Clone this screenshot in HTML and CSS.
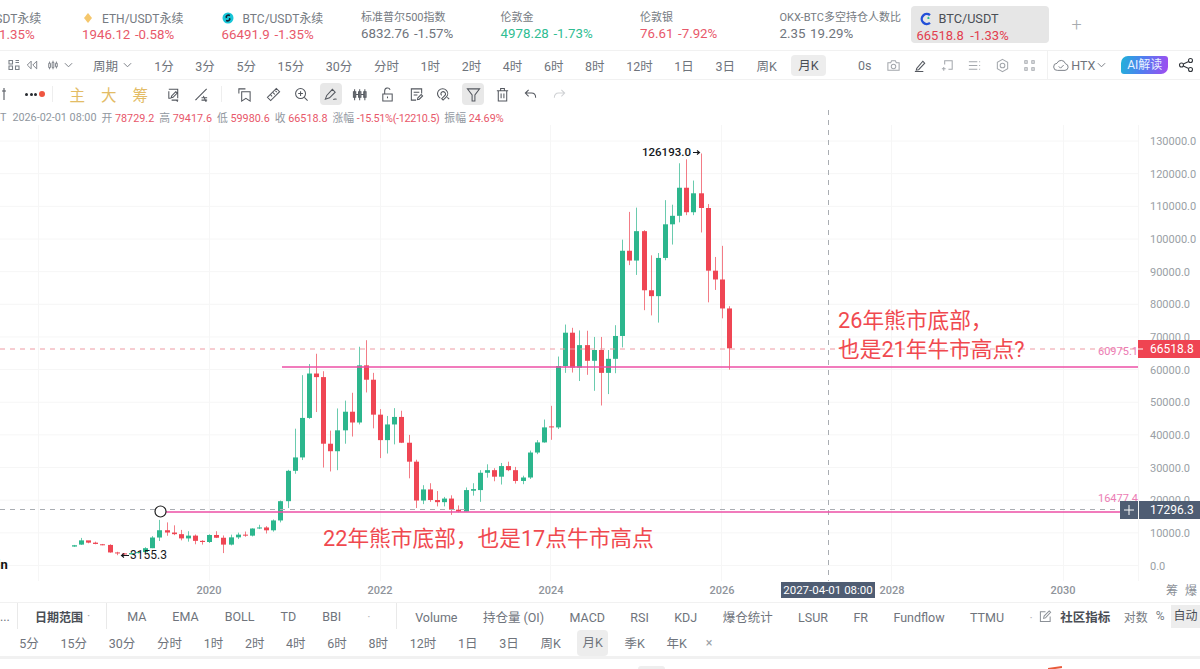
FILE: index.html
```html
<!DOCTYPE html>
<html lang="en">
<head>
  <meta charset="UTF-8" />
  <title>BTC/USDT</title>
  <link rel="stylesheet" href="styles.css">
</head>
<body>
  <header class="tickers">
    <div class="ticker first">
      <div class="name name-icon">BTC/USDT永续</div>
      <div class="value red">66491.9&nbsp;&nbsp;-1.35%</div>
    </div>
    <div class="ticker">
      <div class="name">
        <svg class="coin" viewBox="0 0 10 12"><path d="M5 1 9 6 5 11 1 6Z" fill="#f5c76c"/></svg>
        ETH/USDT永续
      </div>
      <div class="value red">1946.12&nbsp;&nbsp;-0.58%</div>
    </div>
    <div class="ticker">
      <div class="name">
        <svg class="coin" viewBox="0 0 12 12"><circle cx="6" cy="6" r="5.5" fill="#17c6d8"/><path d="M8 3.5C5.5 2.5 3.5 4 4.5 6M4 8.5C6.5 9.500 8.500 8 7.500 6" fill="none" stroke="#123" stroke-width="1.6"/></svg>
        BTC/USDT永续
      </div>
      <div class="value red">66491.9&nbsp;&nbsp;-1.35%</div>
    </div>
    <div class="ticker plain">
      <div class="name">标准普尔500指数</div>
      <div class="value">6832.76&nbsp;&nbsp;-1.57%</div>
    </div>
    <div class="ticker plain">
      <div class="name">伦敦金</div>
      <div class="value green">4978.28&nbsp;&nbsp;-1.73%</div>
    </div>
    <div class="ticker plain">
      <div class="name">伦敦银</div>
      <div class="value red">76.61&nbsp;&nbsp;-7.92%</div>
    </div>
    <div class="ticker plain wide">
      <div class="name">OKX-BTC多空持仓人数比</div>
      <div class="value">2.35&nbsp;&nbsp;19.29%</div>
    </div>
    <div class="ticker-active">
      <div class="name">
        <svg class="coin-main" viewBox="0 0 14 14">
          <path d="M11 3.200A5 5 0 1 0 11 10.800" fill="none" stroke="#2350d8" stroke-width="2.400"/>
          <path d="M9 5.200A2.600 2.600 0 0 1 9.500 7" fill="none" stroke="#2bbf8e" stroke-width="2"/>
        </svg>
        BTC/USDT
      </div>
      <div class="value">66518.8&nbsp;&nbsp;-1.33%</div>
    </div>
    <div class="ticker-add">+</div>
  </header>

  <div class="toolbar periods">
    <span class="ico left-ico"><svg viewBox="0 0 12 12"><path d="M1 1.500h3.500v3.500H1ZM1 7h3.500v3.500H1ZM7.500 1.500H11M7.500 3.500H11M7.500 7H11v3.500H7.500Z"/></svg></span>
    <span class="ico left-ico"><svg viewBox="0 0 14 12"><path d="M6 1.500 1.500 6 6 10.500V1.500ZM12.500 1.500 8 6l4.500 4.500V1.500Z"/></svg></span>
    <span class="ico left-ico"><svg viewBox="0 0 14 12"><path d="M2 4h2v5H2ZM3 2v2M3 9v2M6 3h2v6H6ZM7 1v2M7 9v2M10 4h2v4h-2ZM11 2v2M11 8v2"/></svg></span>
    <svg class="chev" viewBox="0 0 10 6"><path d="M1 1 5 5 9 1"/></svg>
    <span class="period period-menu">周期 <svg class="chev" viewBox="0 0 10 6"><path d="M1 1 5 5 9 1"/></svg></span>
    <span class="period">1分</span>
    <span class="period">3分</span>
    <span class="period">5分</span>
    <span class="period">15分</span>
    <span class="period">30分</span>
    <span class="period">分时</span>
    <span class="period">1时</span>
    <span class="period">2时</span>
    <span class="period">4时</span>
    <span class="period">6时</span>
    <span class="period">8时</span>
    <span class="period">12时</span>
    <span class="period">1日</span>
    <span class="period">3日</span>
    <span class="period">周K</span>
    <span class="period active">月K</span>
    <div class="period-right">
      <span class="seconds">0s</span>
      <span class="ico light"><svg viewBox="0 0 16 16"><path d="M2 5h3l1-2h4l1 2h3v8H2Z"/><circle cx="8" cy="9" r="2.400"/></svg></span>
      <span class="ico dark"><svg viewBox="0 0 16 16"><path d="M4 11 10.500 3.500l2 2L6 12.500l-2.500.5ZM2 14.500h9"/></svg></span>
      <span class="ico light"><svg viewBox="0 0 16 16"><path d="M5 7V3h8v9H9M2 11.500h4M4 9.500v4"/></svg></span>
      <span class="ico light"><svg viewBox="0 0 16 16"><path d="M2 4h9M2 8h9M2 12h9M13 4h1M13 8h1M13 12h1"/></svg></span>
      <span class="ico light"><svg viewBox="0 0 16 16"><path d="M8 1.500 13.500 4.700v6.600L8 14.500 2.500 11.300V4.700Z"/><circle cx="8" cy="8" r="2.500"/></svg></span>
      <span class="ico light"><svg viewBox="0 0 16 16"><path d="M3 3h2.500v2.500H3ZM10.500 3H13v2.500h-2.500ZM3 10.500h2.500V13H3ZM10.500 10.500H13V13h-2.500Z"/></svg></span>
      <div class="source">
        <svg class="cloud" viewBox="0 0 18 14"><path d="M5 12.500a4 4 0 0 1-.5-8A5 5 0 0 1 14 5a3.800 3.800 0 0 1-.5 7.500ZM6.500 8l2 2 3.500-3.500"/></svg>
        HTX
        <svg class="chev" viewBox="0 0 10 6"><path d="M1 1 5 5 9 1"/></svg>
      </div>
      <span class="ai-btn">AI解读</span>
      <span class="ico share"><svg viewBox="0 0 16 16"><circle cx="3.500" cy="8" r="2"/><circle cx="12.500" cy="3.500" r="2"/><circle cx="12.500" cy="12.500" r="2"/><path d="M5.300 7 10.700 4.500M5.300 9l5.400 2.500"/></svg></span>
    </div>
  </div>

  <div class="toolbar tools">
    <span class="pin"><svg viewBox="0 0 6 14"><path d="M3 1v12M1 4h4"/></svg></span>
    <span class="dots"><i></i><i></i><i></i><b></b></span>
    <span class="sep"></span>
    <span class="chip">主</span>
    <span class="chip">大</span>
    <span class="chip">筹</span>
    <span class="tool"><svg viewBox="0 0 16 16"><path d="M3 4.500V12h2M4 2.500h8.500V12M13 14H6M10.500 5 6 9.500 5.500 11.500 7.500 11 12 6.500ZM3 2.500h3M11 14l1.500 1.500"/></svg></span>
    <span class="tool"><svg viewBox="0 0 16 16"><path d="M1.500 14 13.500 2M3 13l-1.500 1M8 11.500h6M8 14h6M10 9.500l3 6.500"/></svg></span>
    <span class="sep"></span>
    <span class="tool"><svg viewBox="0 0 16 16"><path d="M2 7V2h7M5 5h9v10l-4.500-3L5 15Z"/></svg></span>
    <span class="tool"><svg viewBox="0 0 16 16"><path d="M1.500 11 11 1.500l3.500 3.500L5 14.500ZM5 8.500 6.500 10M7.500 6l2 2M10 4l1.500 1.500"/></svg></span>
    <span class="tool"><svg viewBox="0 0 16 16"><circle cx="7" cy="7" r="5.300"/><path d="M11 11l3.500 3.500M7 4.500v5M4.500 7h5"/></svg></span>
    <span class="tool on"><svg viewBox="0 0 16 16"><path d="M2.500 13 4 9l6-6.500 3 3L7 11.500ZM11 13.500c1-1 2-1 3.500-.5"/></svg></span>
    <span class="tool"><svg viewBox="0 0 16 16"><path d="M1.500 5h2.500v6H1.500ZM7 5h2.500v6H7ZM12.500 5H15v6h-2.500ZM2.800 2.500V14M8.200 2.500V14M13.700 2.500V14M4 8h3M9.500 8h3"/></svg></span>
    <span class="tool"><svg viewBox="0 0 16 16"><path d="M3 7.500h10V15H3ZM5 7.500V4a3 3 0 0 1 5.800-1M8 10v2"/></svg></span>
    <span class="tool"><svg viewBox="0 0 16 16"><path d="M13.500 7V2H2.500v12h5M5 5.500h6M5 8.500h4M9 13.500l.5-2L13 8l1.500 1.500-3.500 3.500Z"/></svg></span>
    <span class="tool"><svg viewBox="0 0 16 16"><path d="M3.500 12 2 10.500a5.500 5.500 0 0 1 0-7 5.500 5.500 0 0 1 8 0 5 5 0 0 1 0 7L6.500 14 5 12.500 8.500 9a2.500 2.500 0 0 0-3.500-3.500 2.500 2.500 0 0 0 0 3.500M11 11l2 2"/></svg></span>
    <span class="tool on"><svg viewBox="0 0 16 16"><path d="M1.500 2h13L9.500 8.500V15h-3V8.500Z"/></svg></span>
    <span class="tool"><svg viewBox="0 0 16 16"><path d="M3.500 4h9v11h-9ZM6 4V1.500h4V4M2 4h12M6.500 7v5M9.500 7v5"/></svg></span>
    <span class="tool"><svg viewBox="0 0 16 16"><path d="M6 3 2.500 6.500 6 10M2.500 6.500h6.500c3 0 4.500 2 4.500 5"/></svg></span>
    <span class="tool faint"><svg viewBox="0 0 16 16"><path d="M10 3l3.500 3.500L10 10M13.500 6.500H7c-3 0-4.500 2-4.500 5"/></svg></span>
  </div>

  <div class="chart">
    <div class="ohlc">
      <span class="pair">DT</span>
      <span>2026-02-01 08:00</span>
      <span>开 <em>78729.2</em></span>
      <span>高 <em>79417.6</em></span>
      <span>低 <em>59980.6</em></span>
      <span>收 <em>66518.8</em></span>
      <span>涨幅 <em class="change">-15.51%(-12210.5)</em></span>
      <span>振幅 <em>24.69%</em></span>
    </div>

    <svg id="plot" class="plot" viewBox="0 108 1200 494">
      <g id="grid" class="grid"></g>
      <g id="candles"></g>
      <g id="scale" class="scale"></g>

      <line class="cross" x1="828.500" y1="110" x2="828.500" y2="581"></line>
      <line class="cross" x1="0" y1="509.500" x2="1120" y2="509.500"></line>
      <line class="last-line" x1="0" y1="349" x2="1138" y2="349"></line>
      <line class="trend" x1="282" y1="367" x2="1138" y2="367"></line>
      <line class="trend" x1="166" y1="512" x2="1120" y2="512"></line>
      <circle class="anchor" cx="160.500" cy="511.500" r="5.500"></circle>

      <text class="extreme" x="642" y="156">126193.0</text>
      <path class="arrow" d="M693 152.500h6M697 150.500l2.500 2-2.500 2"></path>
      <text class="extreme small" x="130" y="559">3155.3</text>
      <path class="arrow" d="M122 555.500h7M124 553.500l-2.500 2 2.500 2"></path>
      <text class="cut" x="-3" y="569">in</text>

      <text class="trend-val" x="1098" y="355">60975.1</text>
      <text class="trend-val" x="1098" y="502">16477.4</text>

      <text class="note" x="838" y="328">26年熊市底部，</text>
      <text class="note" x="838" y="357">也是21年牛市高点?</text>
      <text class="note" x="323" y="546">22年熊市底部，也是17点牛市高点</text>

      <rect class="tag-red" x="1138" y="340" width="62" height="18"></rect>
      <path class="tag-tick" d="M1138 349h5"></path>
      <text class="tag-text" x="1150" y="353">66518.8</text>

      <rect class="tag-slate" x="1120" y="501" width="18" height="18"></rect>
      <path class="tag-plus" d="M1124 510h10M1129 505v10"></path>
      <rect class="tag-slate" x="1139" y="501" width="61" height="18"></rect>
      <text class="tag-text" x="1150" y="514">17296.3</text>

      <rect class="tag-slate" x="781" y="582" width="94" height="16"></rect>
      <text class="tag-text date" x="828" y="594">2027-04-01 08:00</text>

      <text class="chip-axis" x="1166" y="595">筹</text>
      <text class="chip-axis" x="1185" y="595">爆</text>
    </svg>
  </div>

  <div class="indicators">
    <span class="more">...</span>
    <span class="divider"></span>
    <span class="range"><b>日期范围</b><i>·</i></span>
    <span class="divider"></span>
    <div class="ind-group main-ind">
      <span>MA</span><span>EMA</span><span>BOLL</span><span>TD</span><span>BBI</span><span class="tiny">·</span>
    </div>
    <span class="divider"></span>
    <div class="ind-group sub-ind">
      <span>Volume</span><span>持仓量 (OI)</span><span>MACD</span><span>RSI</span><span>KDJ</span><span>爆仓统计</span><span>LSUR</span><span>FR</span><span>Fundflow</span><span>TTMU</span><span class="tiny">·</span>
    </div>
    <svg class="edit" viewBox="0 0 14 14"><path d="M7 2H1.500v10.500H12V7M5 9l.5-2.500L11 1l1.500 1.500L7 8.500Z"/></svg>
    <b class="community">社区指标</b>
    <span class="opt">对数</span>
    <span class="opt">%</span>
    <span class="opt auto">自动</span>
  </div>

  <div class="timeframes">
    <span>5分</span><span>15分</span><span>30分</span><span>分时</span><span>1时</span><span>2时</span><span>4时</span><span>6时</span><span>8时</span><span>12时</span><span>1日</span><span>3日</span><span>周K</span><span class="active">月K</span><span>季K</span><span>年K</span><span class="close">×</span>
  </div>

  <div class="bottom-edge">
    <i class="peek-gray"></i>
    <i class="peek-red"></i>
  </div>

  <script src="chart.js"></script>
</body>
</html>
```

FILE: styles.css
```css
* {
  box-sizing: border-box;
  margin: 0;
  padding: 0;
}

html, body {
  height: 669px;
  overflow: hidden;
}

body {
  background-color: #fff;
  color: #6f747c;
  font-family: Roboto, "Noto Sans CJK SC", sans-serif;
  font-size: 12.5px;
  width: 1200px;
}

svg {
  display: block;
}

/* top tickers */
.tickers {
  display: flex;
  height: 50px;
  padding-top: 6px;
}

.ticker {
  flex: 0 0 139.5px;
  padding-top: 2px;
  white-space: nowrap;
}

.ticker.first {
  margin-left: -57.5px;
}

.ticker.wide {
  flex-basis: 131px;
}

.name {
  align-items: center;
  color: #767b82;
  display: flex;
  font-size: 12px;
  height: 19px;
}

.name-icon {
  padding-left: 18px;
}

.value {
  color: #6f747c;
  font-size: 13.300px;
  height: 19px;
  line-height: 19px;
  margin-top: -2px;
  word-spacing: -1px;
}

.value.red {
  color: #e8586a;
}

.value.green {
  color: #2fbd92;
}

.ticker.plain {
  padding-top: 0;
}

.ticker.plain .name {
  font-size: 11px;
}

.ticker.plain .value {
  margin-top: -1px;
}

.coin {
  flex: none;
  height: 12px;
  margin-right: 9px;
  width: 12px;
}

.ticker:nth-child(2) .coin {
  margin-right: 8px;
}

.ticker-active {
  background-color: #e6e6e6;
  border-radius: 4px;
  flex: 0 0 138px;
  height: 37px;
  padding: 3px 6px 0;
}

.ticker-active .name {
  color: #4a4e55;
  font-size: 12.700px;
}

.ticker-active .value {
  color: #e2404f;
  font-size: 13px;
  margin-top: -2px;
  word-spacing: 0;
}

.coin-main {
  height: 14px;
  margin: 0 6px 0 2px;
  width: 14px;
}

.ticker-add {
  color: #a7abb0;
  font-size: 18px;
  font-weight: 300;
  margin-left: 23px;
  margin-top: 8px;
}

/* toolbars */
.toolbar {
  align-items: center;
  border-top: 1px solid #f1f1f1;
  display: flex;
  white-space: nowrap;
}

.periods {
  height: 29px;
  padding-left: 8px;
}

.ico svg,
.chev,
.tool svg,
.pin svg,
.cloud,
.edit {
  fill: none;
  stroke: #7b8087;
  stroke-width: 1.100;
}

.ico svg {
  height: 100%;
  width: 100%;
}

.left-ico {
  display: block;
  flex: none;
  height: 12px;
  margin-right: 6px;
  width: 12px;
}

.left-ico:nth-child(2) {
  margin-right: 9px;
}

.left-ico:nth-child(3) {
  margin-right: 5px;
}

.chev {
  flex: none;
  height: 6px;
  width: 9px;
}

.period {
  border-radius: 4px;
  padding: 2px 10.800px;
}

.period-menu {
  align-items: center;
  display: flex;
  gap: 5px;
  margin-left: 20px;
  padding: 0;
}

.period-menu + .period {
  margin-left: 11.400px;
}

.period.active {
  background-color: #ededed;
  color: #4a4e55;
  line-height: 19px;
  margin-left: 3px;
  padding: 1px 7.500px;
}

.period-right {
  align-items: center;
  display: flex;
  height: 100%;
  margin-left: 32px;
}

.seconds {
  margin-right: 14px;
}

.period-right .ico {
  display: block;
  height: 15px;
  margin-right: 12.300px;
  width: 15px;
}

.ico.dark svg {
  stroke: #54585f;
}

.ico.light svg {
  stroke: #a3a7ac;
}

.source {
  align-items: center;
  border-left: 1px solid #f1f1f1;
  display: flex;
  gap: 2px;
  height: 100%;
  margin-left: -2px;
  padding-left: 5px;
  width: 74px;
}

.cloud {
  height: 13px;
  stroke: #7b8087;
  width: 16px;
}

.ai-btn {
  background: linear-gradient(100deg, #1fb3d8 0%, #4f7ff0 45%, #a24bf0 100%);
  border-radius: 7px 3px 7px 3px;
  color: #e9f2ff;
  font-size: 12px;
  height: 18px;
  line-height: 18px;
  margin-right: 10px;
  text-align: center;
  width: 47px;
}

.period-right .ico.share {
  height: 16px;
  margin-right: 0;
  width: 16px;
}

.share svg {
  stroke: #33373d;
}

.tools {
  height: 29px;
}

.pin {
  margin-left: 1px;
  margin-right: 18px;
}

.pin svg {
  height: 14px;
  stroke: #555a61;
  width: 6px;
}

.dots {
  align-items: center;
  display: flex;
  gap: 1.500px;
  margin-right: 11px;
  width: 16px;
}

.dots i {
  background-color: #26292e;
  border-radius: 50%;
  flex: none;
  height: 3px;
  width: 3px;
}

.dots b {
  background-color: #ef5540;
  border-radius: 50%;
  flex: none;
  height: 6px;
  width: 6px;
}

.sep {
  background-color: #eee;
  height: 16px;
  width: 1px;
}

.tool + .sep {
  margin-left: 2px;
}

.chip {
  color: #e3bc66;
  font-size: 15.500px;
  margin-left: 16px;
}

.sep + .chip {
  margin-left: 16.500px;
}

.tool {
  align-items: center;
  border-radius: 4px;
  display: flex;
  height: 22px;
  justify-content: center;
  margin-right: 6.600px;
  width: 22px;
}

.chip + .tool {
  margin-left: 14px;
}

.tool svg {
  height: 15px;
  stroke: #53575e;
  width: 15px;
}

.sep + .tool {
  margin-left: 11.500px;
}

.tool.on {
  background-color: #e8e8e8;
}

.tool.faint svg {
  stroke: #cfd1d4;
}

/* chart */
.chart {
  height: 494px;
  position: relative;
}

.plot {
  height: 494px;
  width: 1200px;
}

.ohlc {
  align-items: center;
  color: #9097a0;
  display: flex;
  font-size: 10.800px;
  gap: 5px;
  left: -7px;
  position: absolute;
  top: 1px;
  white-space: nowrap;
}

.ohlc em {
  color: #e8586a;
  font-style: normal;
}

.ohlc .change {
  letter-spacing: -0.300px;
}

.ohlc .pair {
  margin-right: 1px;
}

.grid line {
  stroke: #f6f6f6;
  stroke-width: 1;
}

.scale text {
  fill: #9a9fa6;
  font-size: 11px;
}

.scale .year {
  fill: #8f949b;
  font-weight: 500;
  text-anchor: middle;
}

.wick {
  opacity: 0.7;
  stroke-width: 1;
}

.up {
  fill: #2cb68d;
  stroke: #2cb68d;
}

.down {
  fill: #ef4654;
  stroke: #ef4654;
}

.body {
  stroke: none;
}

.cross {
  stroke: #a9adb2;
  stroke-dasharray: 5 5;
}

.last-line {
  stroke: #ee9aa3;
  stroke-dasharray: 5 5;
}

.trend {
  stroke: #ec4fa6;
  stroke-width: 1.600;
}

.anchor {
  fill: #fff;
  stroke: #222;
  stroke-width: 1.200;
}

.extreme {
  fill: #16181c;
  font-size: 11.500px;
  font-weight: 500;
}

.extreme.small {
  font-size: 12px;
  font-weight: 400;
}

.arrow {
  fill: none;
  stroke: #16181c;
  stroke-width: 1.100;
}

.cut {
  fill: #111;
  font-size: 13px;
  font-weight: 700;
}

.trend-val {
  fill: #ec7db4;
  font-size: 11px;
}

.note {
  fill: #f0494f;
  font-size: 21.700px;
}

.tag-red {
  fill: #ef4452;
}

.tag-tick {
  stroke: #fff;
}

.tag-slate {
  fill: #4f5d73;
}

.tag-plus {
  stroke: #fff;
}

.tag-text {
  fill: #fff;
  font-size: 12px;
}

.tag-text.date {
  font-size: 11.500px;
  text-anchor: middle;
}

.chip-axis {
  fill: #8b9097;
  font-size: 12px;
}

/* indicators */
.indicators {
  align-items: center;
  border-top: 1px solid #f1f1f1;
  display: flex;
  height: 27px;
  white-space: nowrap;
}

.more {
  margin-right: 7px;
  width: 10px;
}

.divider {
  background-color: #e9e9e9;
  flex: none;
  height: 26px;
  width: 1px;
}

.range {
  display: flex;
  gap: 4px;
  padding: 0 16px 0 17px;
}

.range b {
  color: #4a4e55;
  font-size: 12px;
}

.range i {
  color: #aaa;
  font-style: normal;
}

.ind-group {
  align-items: baseline;
  display: flex;
}

.main-ind {
  flex: 0 0 289px;
  gap: 26px;
  padding-left: 20px;
}

.sub-ind {
  flex: 0 0 642px;
  gap: 25.400px;
  padding-left: 18px;
}

.tiny {
  color: #bbb;
}

.edit {
  flex: none;
  height: 13px;
  stroke: #8b9097;
  width: 13px;
}

.community {
  color: #4a4e55;
  font-size: 12.500px;
  margin-left: 8px;
  margin-right: 13.500px;
}

.opt {
  color: #777c83;
  font-size: 12px;
  margin-right: 8px;
}

.opt.auto {
  background-color: #ededed;
  color: #4a4e55;
  height: 23px;
  line-height: 23px;
  margin-left: -2px;
  margin-right: 0;
  padding: 0 3px;
  width: 30px;
}

.timeframes {
  align-items: center;
  display: flex;
  height: 27px;
  padding-left: 8.400px;
  white-space: nowrap;
}

.timeframes span {
  padding: 0 10.850px;
}

.timeframes .active {
  background-color: #ededed;
  border-radius: 4px;
  line-height: 26px;
  margin: 0 5.850px;
  padding: 0 5px;
}

.timeframes .close {
  color: #9aa0a6;
  padding: 0 8px;
}

.bottom-edge {
  border-top: 3px solid #f1f1f1;
  display: flex;
  height: 12px;
}

.peek-gray {
  background-color: #eee;
  border-radius: 6px 6px 0 0;
  height: 3px;
  margin: 7px 0 0 638px;
  width: 27px;
}

.peek-red {
  background-color: #e85a3a;
  height: 2px;
  margin: 8px 0 0 383px;
  transform: rotate(-8deg);
  width: 14px;
}
```

FILE: chart.js
```js
// monthly candles, jun 2018 -> feb 2026: open, high, low, close
const candles = [
  [5800, 6300, 5700, 6200], [6400, 8450, 6300, 7700], [7700, 7400, 6800, 7000], [7000, 7300, 6500, 6600],
  [6500, 6600, 6200, 6450], [6300, 6500, 3900, 4000], [4000, 4200, 3155, 3700], [3700, 3800, 3300, 3400],
  [3400, 4200, 3400, 3800], [3800, 4200, 3700, 4100], [4100, 5600, 4000, 5300], [5300, 9000, 5300, 8570],
  [8570, 13970, 7500, 10800], [10800, 13200, 9100, 10100], [10100, 12300, 9300, 9600], [9600, 10900, 7700, 8300],
  [8300, 10500, 7300, 9150], [9150, 9500, 6500, 7550], [7550, 7750, 6400, 7200], [7200, 9550, 6900, 9350],
  [9350, 10500, 8400, 8500], [8500, 9200, 3800, 6400], [6400, 9450, 6150, 8620], [8620, 10070, 8100, 9450],
  [9450, 10400, 8800, 9140], [9140, 11400, 8900, 11330], [11330, 12470, 11150, 11650], [11650, 12050, 9800, 10780],
  [10780, 14100, 10370, 13800], [13800, 19900, 13200, 19700], [19700, 29300, 17600, 29000], [29000, 41900, 28100, 33100],
  [33100, 58300, 32300, 45200], [45200, 61700, 44900, 58800], [58800, 64850, 47000, 57700], [57700, 59500, 30000, 37300],
  [37300, 41300, 28800, 35000], [35000, 48100, 29200, 41400], [41400, 50500, 37300, 47100], [47100, 52900, 39500, 43800],
  [43800, 66999, 43200, 61300], [61300, 69000, 53000, 56900], [56900, 59000, 42000, 46200], [46200, 47900, 32900, 38400],
  [38400, 45800, 34300, 43200], [43200, 48200, 37100, 45500], [45500, 47400, 37500, 37600], [37600, 40000, 26700, 31800],
  [31800, 32400, 17600, 19900], [19900, 24600, 18800, 23300], [23300, 25200, 19500, 20050], [20050, 22800, 18100, 19400],
  [19400, 21000, 18100, 20500], [20500, 21500, 15500, 17100], [17100, 18400, 16300, 16500], [16500, 23900, 16500, 23100],
  [22900, 25200, 21400, 23400], [23100, 29200, 19500, 28400], [28400, 31000, 26900, 29200], [29200, 29800, 25800, 27200],
  [27200, 31400, 24800, 30450], [30450, 31800, 28900, 29200], [29200, 30200, 25100, 25900], [25900, 27500, 24900, 26950],
  [26950, 35200, 26500, 34600], [34600, 38400, 34100, 37700], [37700, 44700, 37600, 42300], [42600, 48900, 38500, 42300],
  [42300, 64000, 41800, 61100], [61100, 73800, 59000, 71300], [71300, 72800, 59100, 60600], [60600, 72000, 56500, 67500],
  [67500, 71900, 58400, 62700], [62700, 70000, 53500, 66000], [66000, 70000, 49000, 59000], [59000, 66000, 52500, 63300],
  [63300, 73600, 58900, 70300], [70300, 99800, 66800, 96400], [96400, 108300, 92000, 93400], [93400, 109600, 89000, 102400],
  [102400, 102700, 78200, 84300], [84300, 95000, 76600, 82500], [82500, 95700, 74400, 94200], [94200, 111900, 93500, 104500],
  [104500, 110500, 98300, 107100], [107100, 123200, 105100, 115700], [115700, 124400, 107300, 108200], [108200, 117900, 107300, 114000],
  [114000, 126193, 102000, 109500], [109500, 110700, 80600, 90300], [90300, 94500, 84400, 87600], [87600, 97900, 75700, 78729],
  [78729, 79417, 59980, 66518]
];

const NS = 'http://www.w3.org/2000/svg';
const priceY = p => 565.5 - p * 0.003265;

function add(parent, tag, attrs, text) {
  const el = document.createElementNS(NS, tag);
  Object.keys(attrs).forEach(k => el.setAttribute(k, attrs[k]));
  if (text) el.textContent = text;
  parent.appendChild(el);
}

const grid = document.getElementById('grid');
const scale = document.getElementById('scale');

for (let p = 0; p <= 130000; p += 10000) {
  const y = priceY(p);
  add(grid, 'line', { x1: 0, x2: 1138, y1: y, y2: y });
  add(scale, 'text', { x: 1150, y: y + 4 }, p.toFixed(1));
}

[38, 209, 380, 550, 721, 891, 1063, 1138].forEach(x => {
  add(grid, 'line', { x1: x + 0.5, x2: x + 0.5, y1: 125, y2: 581 });
});

[[209, '2020'], [380, '2022'], [551, '2024'], [722, '2026'], [892, '2028'], [1063, '2030']].forEach(t => {
  add(scale, 'text', { x: t[0], y: 594, class: 'year' }, t[1]);
});

const group = document.getElementById('candles');
candles.forEach((c, i) => {
  const x = Math.round(729 - (candles.length - 1 - i) * 7.12) + 0.5;
  const side = c[3] >= c[0] ? 'up' : 'down';
  const top = priceY(Math.max(c[0], c[3]));
  const height = Math.max(1, Math.abs(c[3] - c[0]) * 0.003265);
  add(group, 'line', { class: 'wick ' + side, x1: x, x2: x, y1: priceY(c[1]), y2: priceY(c[2]) });
  add(group, 'rect', { class: 'body ' + side, x: x - 2.5, y: top, width: 5, height: height });
});
```
